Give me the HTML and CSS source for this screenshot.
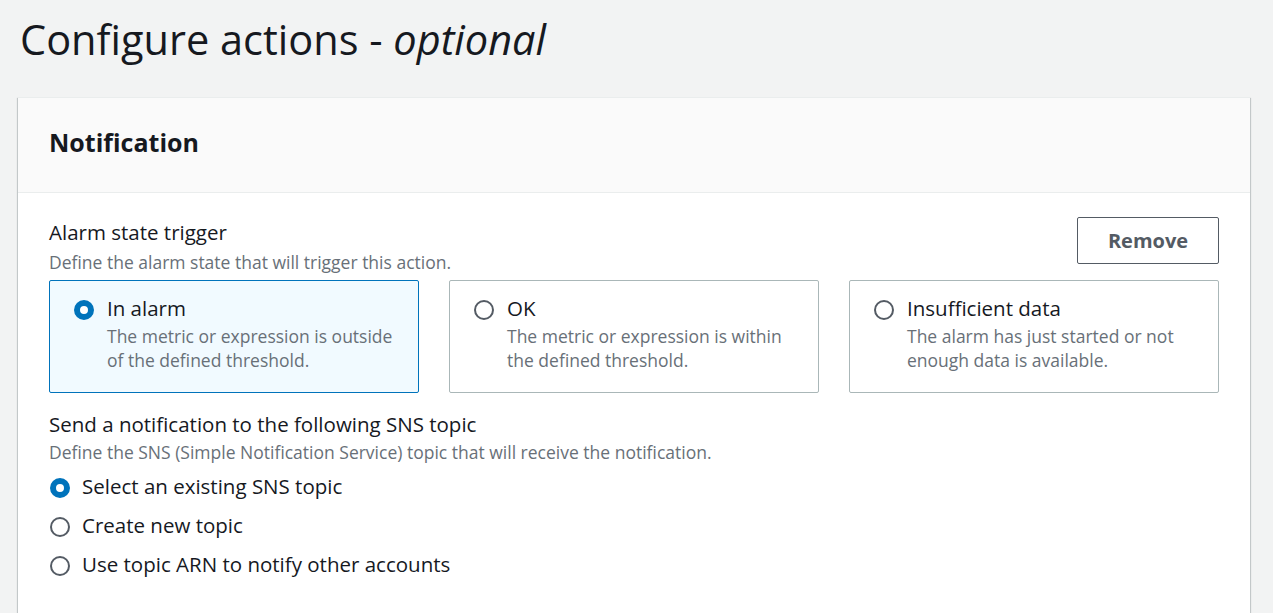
FILE: index.html
```html
<!DOCTYPE html>
<html lang="en">
<head>
<meta charset="utf-8">
<title>Configure actions</title>
<link rel="stylesheet" href="styles.css">
</head>
<body>
<h1 class="page-title">Configure actions - <i>optional</i></h1>
<section class="container">
  <header class="container-header">
    <h2>Notification</h2>
  </header>
  <div class="container-body">
    <div class="field-row">
      <div class="field-head">
        <div class="field-label">Alarm state trigger</div>
        <div class="field-desc">Define the alarm state that will trigger this action.</div>
      </div>
      <button class="btn">Remove</button>
    </div>
    <div class="tiles">
      <div class="tile selected">
        <span class="radio checked"></span>
        <div class="tile-text">
          <div class="tile-label">In alarm</div>
          <div class="tile-desc">The metric or expression is outside of the defined threshold.</div>
        </div>
      </div>
      <div class="tile">
        <span class="radio"></span>
        <div class="tile-text">
          <div class="tile-label">OK</div>
          <div class="tile-desc">The metric or expression is within the defined threshold.</div>
        </div>
      </div>
      <div class="tile">
        <span class="radio"></span>
        <div class="tile-text">
          <div class="tile-label">Insufficient data</div>
          <div class="tile-desc">The alarm has just started or not enough data is available.</div>
        </div>
      </div>
    </div>

    <div class="field-head second">
      <div class="field-label">Send a notification to the following SNS topic</div>
      <div class="field-desc">Define the SNS (Simple Notification Service) topic that will receive the notification.</div>
    </div>
    <div class="radio-group">
      <div class="option"><span class="radio checked"></span><span class="option-label">Select an existing SNS topic</span></div>
      <div class="option"><span class="radio"></span><span class="option-label">Create new topic</span></div>
      <div class="option"><span class="radio"></span><span class="option-label">Use topic ARN to notify other accounts</span></div>
    </div>
  </div>
</section>
</body>
</html>
```

FILE: styles.css
```css
* { box-sizing: border-box; }

body {
  margin: 0;
  background: #f2f3f3;
  font-family: "Open Sans", "Noto Sans", sans-serif;
  color: #16191f;
}

.page-title {
  margin: 0;
  padding: 14px 20px 0;
  font-size: 41.5px;
  line-height: 50px;
  font-weight: 400;
  color: #16191f;
}

.page-title i { font-style: italic; }

.container {
  margin: 33px 23px 0 18px;
  background: #fff;
  box-shadow: 0 1px 1px 0 rgba(0, 28, 36, 0.3), 1px 1px 1px 0 rgba(0, 28, 36, 0.15), -1px 1px 1px 0 rgba(0, 28, 36, 0.15);
  border-top: 1px solid #eaeded;
}

.container-header {
  height: 95px;
  background: #fafafa;
  border-bottom: 1px solid #eaeded;
  padding: 0 31px 7px;
  display: flex;
  align-items: center;
}

.container-header h2 {
  margin: 0;
  font-size: 25px;
  font-weight: 700;
  line-height: 30px;
  color: #16191f;
}

.container-body {
  padding: 24px 31px 40px;
}

.field-row {
  display: flex;
  justify-content: space-between;
  align-items: flex-start;
}

.field-head { padding-top: 2px; }
.field-head.second { margin-top: 18px; padding-top: 0; }

.field-label {
  font-size: 20.5px;
  line-height: 26px;
}

.field-desc {
  margin-top: 5px;
  font-size: 17.5px;
  line-height: 24px;
  color: #687078;
}

.field-head.second .field-desc { margin-top: 3px; }

.btn {
  height: 47px;
  width: 142px;
  background: #fff;
  border: 1px solid #545b64;
  border-radius: 2px;
  font-family: inherit;
  font-size: 20px;
  font-weight: 700;
  color: #545b64;
  cursor: pointer;
}

.tiles {
  margin-top: 6px;
  display: grid;
  grid-template-columns: repeat(3, 1fr);
  gap: 30px;
}

.tile {
  display: flex;
  gap: 13px;
  border: 1px solid #aab7b8;
  border-radius: 2px;
  padding: 15px 24px 20px;
  background: #fff;
}

.tile.selected {
  border-color: #0073bb;
  background: #f1faff;
}

.radio {
  flex: none;
  width: 20px;
  height: 20px;
  border-radius: 50%;
  border: 2px solid #545b64;
  background: #fff;
  margin-top: 4px;
}

.radio.checked {
  border: 6px solid #0073bb;
}

.tile-label {
  font-size: 20.5px;
  line-height: 24px;
}

.tile-desc {
  margin-top: 4px;
  font-size: 17.5px;
  line-height: 24px;
  color: #687078;
}

.radio-group {
  margin-top: 9px;
  display: flex;
  flex-direction: column;
  gap: 13px;
}

.option {
  display: flex;
  align-items: flex-start;
  gap: 12px;
  height: 26px;
  padding-left: 1px;
}

.option .radio { margin-top: 5px; }

.option-label {
  font-size: 20.5px;
  line-height: 26px;
}
```
